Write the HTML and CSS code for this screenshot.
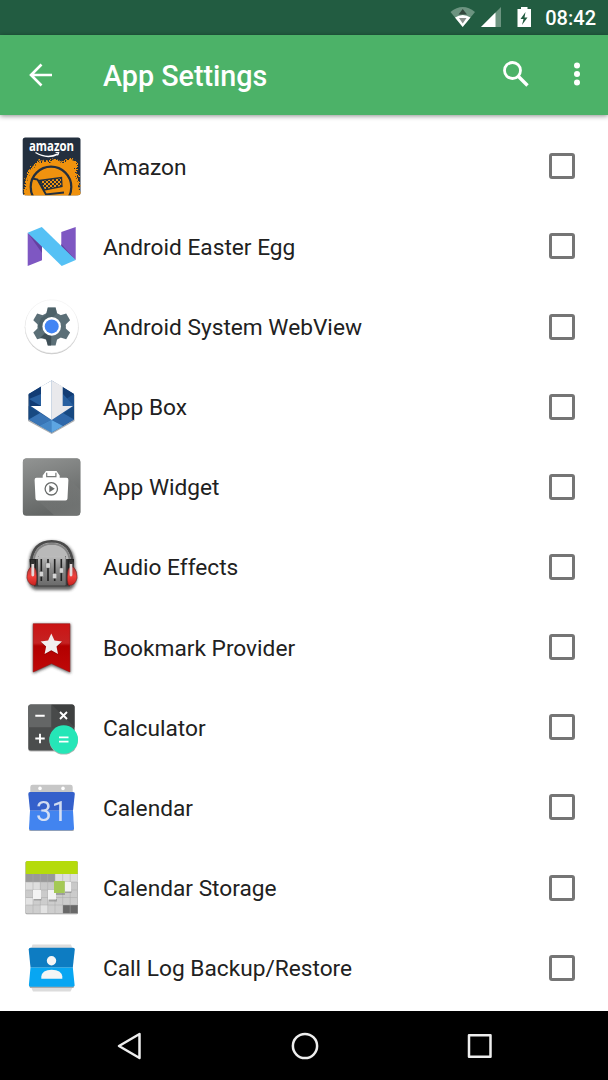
FILE: index.html
```html
<!DOCTYPE html>
<html lang="en">
<head>
    <meta charset="UTF-8">
    <meta name="viewport" content="width=device-width, initial-scale=1.0">
    <title>App Settings</title>
    <link rel="stylesheet" href="styles.css">
</head>
<body>
    <div class="screen">
        <div class="status-bar">
            <svg class="status-icons" width="90" height="34" viewBox="446 0 90 34">
                <path d="M450.5 12Q462.7 2 475 12L462.7 27Z" fill="#6c9480"/>
                <path d="M455 17.500Q462.7 12.500 470.500 17.500L462.700 27Z" fill="#fff"/>
                <path d="M458.500 14.500L462.700 9L467 14.500Z" fill="#34483e"/>
                <path d="M459 18H466.500L462.700 23.500Z" fill="#89908c"/>
                <path d="M481 27L501 7V27Z" fill="#6c9480"/>
                <path d="M481 27L495.500 12.500V27Z" fill="#fff"/>
                <path d="M517.500 9H521V7H527.500V9H531V27H517.500Z" fill="#fff"/>
                <path d="M525.500 12L520.500 19H523.500L522 25L527.500 17.500H524.500Z" fill="#225c41"/>
            </svg>
            <span class="clock">08:42</span>
        </div>

        <header class="toolbar">
            <svg class="back" width="24" height="24" viewBox="0 0 24 24">
                <path d="M23 12H2M12.500 1.500L2 12L12.500 22.500" fill="none" stroke="#fff" stroke-width="2.600"/>
            </svg>
            <h1>App Settings</h1>
            <svg class="search" width="28" height="28" viewBox="0 0 28 28">
                <circle cx="10.500" cy="10.500" r="8" fill="none" stroke="#fff" stroke-width="2.800"/>
                <path d="M16.500 16.500L25.500 25.500" stroke="#fff" stroke-width="3.400"/>
            </svg>
            <svg class="more" width="8" height="26" viewBox="0 0 8 26">
                <g fill="#fff"><circle cx="4" cy="4.500" r="3"/><circle cx="4" cy="13" r="3"/><circle cx="4" cy="21.500" r="3"/></g>
            </svg>
        </header>

        <ul class="app-list">
            <li class="app">
                <svg class="app-icon" viewBox="0 0 63 63">
                    <defs>
                        <clipPath id="amz"><rect x="2.700" y="2.500" width="57.800" height="57.700" rx="2.500"/></clipPath>
                        <pattern id="mesh" width="4" height="4" patternUnits="userSpaceOnUse"><rect width="4" height="4" fill="#232f3e"/><rect width="2" height="2" fill="#f0920f"/><rect x="2" y="2" width="2" height="2" fill="#f0920f"/></pattern>
                        <filter id="rough" x="-10%" y="-10%" width="120%" height="120%"><feTurbulence type="fractalNoise" baseFrequency=".7" numOctaves="2" seed="4"/><feDisplacementMap in="SourceGraphic" scale="9" xChannelSelector="R" yChannelSelector="G"/></filter>
                    </defs>
                    <g clip-path="url(#amz)">
                        <rect width="63" height="63" fill="#232f3e"/>
                        <path d="M3 63L5 50L7 39L12 32L19 25L25 27L34 24L43 27L51 23L57 27L57 38L59 48L61 63Z" fill="#f0920f" filter="url(#rough)"/>
                        <path d="M7 63L9 48L16 35L30 28L45 32L54 42L57 63Z" fill="#f0920f"/>
                        <circle cx="31" cy="52" r="20.300" fill="none" stroke="#232f3e" stroke-width="2.200"/>
                        <path d="M12.500 43.500L17.500 44.500L26 59.500L44 57.500" fill="none" stroke="#232f3e" stroke-width="1.900"/>
                        <path d="M19.500 45.500L41.500 42.500L42 51.500L24.500 55Z" fill="url(#mesh)" stroke="#232f3e" stroke-width="1.300"/>
                    </g>
                    <text class="amazon-logo" x="31.500" y="16.200" textLength="45" lengthAdjust="spacingAndGlyphs">amazon</text>
                    <path d="M15.500 17.500Q27 24.500 38 19" fill="none" stroke="#fff" stroke-width="1.400"/>
                    <path d="M35.500 17.600L39 17.400L37.700 20.500" fill="none" stroke="#fff"/>
                </svg>
                <span class="app-name">Amazon</span>
                <span class="checkbox"></span>
            </li>
            <li class="app">
                <svg class="app-icon" viewBox="0 0 63 63">
                    <path d="M7.700 17.700L22 31V45.300L7.700 51ZM41.300 17L55.700 12V45L41.300 32Z" fill="#7e57c2"/>
                    <path d="M7.700 17.700L22 38V31ZM41.300 29L55.700 45L41.300 34Z" fill="#6540a0"/>
                    <path d="M7.700 17.700L21.800 12L55.700 45L41.700 51Z" fill="#55c1f5"/>
                </svg>
                <span class="app-name">Android Easter Egg</span>
                <span class="checkbox"></span>
            </li>
            <li class="app">
                <svg class="app-icon" viewBox="0 0 63 63">
                    <circle cx="31.700" cy="32.300" r="26.900" fill="#cacaca"/>
                    <circle cx="31.700" cy="31.400" r="26.600" fill="#fff" stroke="#ececec" stroke-width=".5"/>
                    <g fill="#5b6f77">
                        <circle cx="31.700" cy="31.400" r="14.200"/>
                        <path id="tooth" d="M26 20L27.800 12.400H35.600L37.400 20V43L35.600 50.400H27.800L26 43Z"/>
                        <use href="#tooth" transform="rotate(60 31.700 31.400)"/>
                        <use href="#tooth" transform="rotate(120 31.700 31.400)"/>
                    </g>
                    <path d="M31.700 31.400L20 43L26 44.500L27.800 50.400H31Z" fill="#37474f" opacity=".8"/>
                    <path d="M26 20L27.800 12.400H35.600L37 18L20 36L18 31L21 23Z" fill="#455a60" opacity=".6"/>
                    <circle cx="31.700" cy="31.400" r="9.300" fill="#fff"/>
                    <circle cx="31.700" cy="31.400" r="7" fill="#4285f4"/>
                </svg>
                <span class="app-name">Android System WebView</span>
                <span class="checkbox"></span>
            </li>
            <li class="app">
                <svg class="app-icon" viewBox="0 0 63 63">
                    <path d="M31.700 6.500L54.500 20V46L31.700 59L8 46V20Z" fill="#a9adb2"/>
                    <path d="M31.700 5.500L54 19V44.500L31.700 57.500L8.700 44.500V19Z" fill="#1c4f8d"/>
                    <path d="M8.700 19L21 11.500V31H10ZM42.700 12L54 19L43 26Z" fill="#123c74"/>
                    <path d="M21 19V31L9 24ZM43 19L54 31H43Z" fill="#285f9f"/>
                    <path d="M8.700 31L20 39L8.700 44.500ZM54 31V44L43 39Z" fill="#174981"/>
                    <path d="M20 38L31.700 45L20 51L8.700 44.500Z" fill="#3975b6"/>
                    <path d="M31.700 45L43 38L54 44.500L43 51Z" fill="#2f68aa"/>
                    <path d="M31.700 45L43 51L31.700 57.500L20 51Z" fill="#5da5e2"/>
                    <path d="M31.700 45V57.500L20 51Z" fill="#4587c7"/>
                    <path d="M31.700 5.500L42.700 11.500V31H53L31.700 45Z" fill="#e9e9ec"/>
                    <path d="M31.700 5.500L21 11.500V31H10.700L31.700 45Z" fill="#fff"/>
                </svg>
                <span class="app-name">App Box</span>
                <span class="checkbox"></span>
            </li>
            <li class="app">
                <svg class="app-icon" viewBox="0 0 63 63">
                    <defs><linearGradient id="grey" x1="0" y1="0" x2="0.300" y2="1"><stop stop-color="#929493"/><stop offset="1" stop-color="#636665"/></linearGradient><linearGradient id="shade" x1="0" y1="0" x2="1" y2="1"><stop stop-color="#666968"/><stop offset="1" stop-color="#858786"/></linearGradient></defs>
                    <rect x="2.900" y="3.400" width="57.400" height="57.400" rx="3.500" fill="#5d605f"/>
                    <rect x="2.900" y="3.400" width="57.400" height="56.700" rx="3.500" fill="url(#grey)"/>
                    <path d="M15 43L34 60H57Q60.300 60 60.300 56.500V35L48 22Z" fill="url(#shade)" opacity=".45"/>
                    <path d="M22.700 22.800V20.500L26 16.100H36.500L39.700 20.500V22.800H46.500Q48.500 22.800 48.400 25L47.500 43.500Q47.400 45.500 45.500 45.500H17.500Q15.600 45.500 15.500 43.500L14.600 25Q14.500 22.800 16.500 22.800Z" fill="#fff"/>
                    <path d="M26.700 17.700V21.600H35.900V17.700" fill="none" stroke="#777a79" stroke-width="1.200"/>
                    <circle cx="31.300" cy="33.800" r="6.200" fill="none" stroke="#686b6a" stroke-width="1.300"/>
                    <path d="M29.300 30.300L34.800 33.800L29.300 37.300Z" fill="#686b6a"/>
                </svg>
                <span class="app-name">App Widget</span>
                <span class="checkbox"></span>
            </li>
            <li class="app">
                <svg class="app-icon" viewBox="0 0 63 63">
                    <defs>
                        <filter id="soft" x="-20%" y="-20%" width="140%" height="140%"><feGaussianBlur stdDeviation="1.500"/></filter>
                        <linearGradient id="panel" x1="0" y1="0" x2="0" y2="1"><stop stop-color="#bdbdbd"/><stop offset=".5" stop-color="#858585"/><stop offset="1" stop-color="#6b6b6b"/></linearGradient>
                        <linearGradient id="ear" x1="0" y1="0" x2="0" y2="1"><stop stop-color="#a93a38"/><stop offset=".5" stop-color="#f0413c"/><stop offset="1" stop-color="#c92320"/></linearGradient>
                    </defs>
                    <path d="M9 32Q8 7 32 6Q56 7 55 32Q60 50 50 55H15Q4 50 9 32Z" fill="#333" opacity=".75" filter="url(#soft)"/>
                    <path d="M12 28Q14 8 32 7Q50 8 52 28L50 51H14Z" fill="#b9b9b9"/>
                    <path d="M11 27Q13 6.500 31.700 6.200Q50.500 6.500 52.500 27" fill="none" stroke="#4b4b4b" stroke-width="2.600"/>
                    <path d="M13.500 27Q15 9.300 31.700 8.800Q48.500 9.300 50 27" fill="none" stroke="#858585" stroke-width="2"/>
                    <path d="M14 24H18V21H46V24H50V51.500H14Z" fill="#3d3d3d"/>
                    <rect x="18" y="21" width="27.700" height="29.500" rx="1" fill="url(#panel)"/>
                    <path d="M21.300 24V46M28 24V46M34.700 24V46M41.300 24V46" stroke="#222" stroke-width="1.600"/>
                    <g fill="#d4d4d4" stroke="#666" stroke-width=".4"><rect x="19.200" y="36.500" width="4.300" height="5"/><rect x="25.900" y="28" width="4.300" height="5"/><rect x="32.500" y="38.500" width="4.300" height="5"/><rect x="39.200" y="33" width="4.300" height="5"/></g>
                    <path d="M9.500 24H16V50H14L10 32ZM47.500 24H54L53.500 32L49 50H47.500Z" fill="#222"/>
                    <path d="M10 32.500Q16 30 16.500 38Q17.500 46 15.500 50.500Q8.500 50.500 6.900 43Q6.500 36.500 10 32.500ZM54 32.500Q48 30 47.500 38Q46.500 46 48.500 50.500Q55.500 50.500 57.100 43Q57.500 36.500 54 32.500Z" fill="url(#ear)" stroke="#5d1d1c" stroke-width=".5"/>
                    <path d="M12.800 28V40M51 28V40" stroke="#e5dada" stroke-width="2.800" stroke-linecap="round"/>
                    <path d="M12.800 25V29M51 25V29" stroke="#333" stroke-width="3.500"/>
                </svg>
                <span class="app-name">Audio Effects</span>
                <span class="checkbox"></span>
            </li>
            <li class="app">
                <svg class="app-icon" viewBox="0 0 63 63">
                    <defs><linearGradient id="red" x1="0" y1="0" x2="0" y2="1"><stop stop-color="#ca1414"/><stop offset=".4" stop-color="#c52222"/><stop offset=".46" stop-color="#b20000"/><stop offset="1" stop-color="#bf0808"/></linearGradient></defs>
                    <path d="M13 8H50.500V57.500L31.500 49.500L13 57.500Z" fill="#333" opacity=".8" filter="url(#soft)"/>
                    <path d="M13.200 7.700H49.900V56L31.500 47.600L13.200 56Z" fill="url(#red)" stroke="#9d0808" stroke-width=".5"/>
                    <path d="M31.300 18.500L34.500 25.500L42 26.300L36.500 31.500L38 38.800L31.300 35.200L24.600 38.800L26.100 31.500L20.600 26.300L28.100 25.500Z" fill="#650000" opacity=".5"/>
                    <path d="M31.300 17.600L34.500 24.600L42 25.400L36.500 30.600L38 37.900L31.300 34.300L24.600 37.900L26.100 30.600L20.600 25.400L28.100 24.600Z" fill="#f2eeee"/>
                </svg>
                <span class="app-name">Bookmark Provider</span>
                <span class="checkbox"></span>
            </li>
            <li class="app">
                <svg class="app-icon" viewBox="0 0 63 63">
                    <rect x="8.300" y="9.500" width="46.200" height="46" rx="2.500" fill="#b5b5b5"/>
                    <rect x="8.300" y="8.500" width="46.200" height="46" rx="2.500" fill="#4b4d4d"/>
                    <path d="M8.300 31.200V11Q8.300 8.500 10.800 8.500H31.700V31.200Z" fill="#646666"/>
                    <path d="M31.700 8.500H52Q54.500 8.500 54.500 11V31.200H31.700Z" fill="#3e4040"/>
                    <path d="M31.700 8.500L54.500 31.200H31.700Z" fill="#484a4a"/>
                    <path d="M15.300 19.800H24.700M15.300 42.500H24.700M20 37.800V47.200M40 16L47 23M47 16L40 23" stroke="#fff" stroke-width="1.900"/>
                    <circle cx="43.700" cy="44.300" r="14.300" fill="#aab5b1"/>
                    <circle cx="43.700" cy="43.500" r="14.300" fill="#25e6b7"/>
                    <path d="M39 41.300H48.500M39 45.700H48.500" stroke="#fff" stroke-width="1.700"/>
                </svg>
                <span class="app-name">Calculator</span>
                <span class="checkbox"></span>
            </li>
            <li class="app">
                <svg class="app-icon" viewBox="0 0 63 63">
                    <path d="M10.300 17V11Q10.300 8.700 12.500 8.700H50.500Q52.700 8.700 52.700 11V17Z" fill="#c7c7c7"/>
                    <circle cx="20" cy="12.400" r="1.800" fill="#fff"/><circle cx="43" cy="12.400" r="1.800" fill="#fff"/>
                    <path d="M9 52L9.500 55H53.500L54 52Z" fill="#aaa"/>
                    <path d="M8.300 18Q8.300 16 10 16H53Q55 16 54.800 18L53 34.700H10Z" fill="#3460cb"/>
                    <path d="M10 34.700H53L54 52.500Q54 54.300 52 54.300H11Q9 54.300 9 52.500Z" fill="#4284f0"/>
                    <text class="calendar-day" x="31.700" y="45.300">31</text>
                </svg>
                <span class="app-name">Calendar</span>
                <span class="checkbox"></span>
            </li>
            <li class="app">
                <svg class="app-icon" viewBox="0 0 63 63">
                    <defs><linearGradient id="tiles" x1="0" y1="0" x2="0" y2="1"><stop stop-color="#c4c4c4"/><stop offset="1" stop-color="#cfcfcf"/></linearGradient></defs>
                    <rect x="5.400" y="5.200" width="52.600" height="53" rx="1.500" fill="#999"/>
                    <rect x="5.700" y="4.900" width="52" height="52.500" rx="1.500" fill="url(#tiles)"/>
                    <path d="M5.700 17.900V6.400Q5.700 4.900 7.200 4.900H56.200Q57.700 4.900 57.700 6.400V17.900Z" fill="#b5db0b"/>
                    <path d="M5.700 18H35V26H5.700Z" fill="#999"/>
                    <path d="M35 18H57.700V26H35ZM5.700 26H20V34H5.700Z" fill="#dedede"/>
                    <path d="M43 49H57.700V57.200H43Z" fill="#686868"/>
                    <path d="M20 49H28V57H20ZM5.700 42H13V49H5.700Z" fill="#e3e3e3"/>
                    <path d="M13 18V57M20.300 18V57M27.700 18V57M35 18V57M42.700 18V57M50.200 18V57M6 26H57M6 34H57M6 41.500H57M6 49H57" stroke="#aaa" stroke-width=".5"/>
                    <path d="M14 42H21.500V44.500H14ZM29 43H37V45.500H29ZM36 37H45V39H36ZM45 35H51.500V37H45Z" fill="#777" opacity=".5"/>
                    <path d="M13 34H21V43H13ZM28 34H36V43.500H28ZM45 26H51V35.500H45Z" fill="#f3f3f3"/>
                    <rect x="34" y="25" width="10.700" height="12" fill="#a4c955"/>
                </svg>
                <span class="app-name">Calendar Storage</span>
                <span class="checkbox"></span>
            </li>
            <li class="app">
                <svg class="app-icon" viewBox="0 0 63 63">
                    <path d="M11 13L12.500 8.400H51L52.700 13V51L50.500 55.500H13L11 51Z" fill="#dcdcdc"/>
                    <path d="M9 49L10 52H53.500L54.500 49Z" fill="#aaa"/>
                    <path d="M8.700 13.500Q8.700 11.700 10.500 11.700H53Q55 11.700 54.800 13.500L52.800 31.400H10.500Z" fill="#0d7cc2"/>
                    <path d="M10.500 31.400H52.800L54.600 49Q54.600 50.700 53 50.700H10.500Q8.700 50.700 8.900 49Z" fill="#08a6f2"/>
                    <circle cx="31.500" cy="24.700" r="4.700" fill="#f5f5f5"/>
                    <path d="M21.300 42.700V40.500Q22 34 31.700 33.700Q41.500 34 42.300 40.500V42.700Z" fill="#f5f5f5"/>
                </svg>
                <span class="app-name">Call Log Backup/Restore</span>
                <span class="checkbox"></span>
            </li>
        </ul>

        <nav class="nav-bar">
            <svg width="28" height="30" viewBox="0 0 28 30"><path d="M3 15L23.500 3V27Z"/></svg>
            <svg width="28" height="30" viewBox="0 0 28 30"><circle cx="14" cy="15" r="12.100"/></svg>
            <svg width="28" height="30" viewBox="0 0 28 30"><rect x="3" y="4.300" width="21.500" height="21.500"/></svg>
        </nav>
    </div>
</body>
</html>
```

FILE: styles.css
```css
* {
    box-sizing: border-box;
}

body {
    margin: 0;
    background: #fff;
    font-family: Roboto, sans-serif;
    color: #212121;
}

.screen {
    display: flex;
    flex-direction: column;
    width: 608px;
    height: 1080px;
    overflow: hidden;
}

.status-bar {
    display: flex;
    align-items: center;
    justify-content: flex-end;
    gap: 9px;
    height: 34.5px;
    padding-right: 12px;
    background: #225c41;
    color: #fff;
}

.clock {
    padding-top: 2px;
    font-size: 20px;
    font-weight: 500;
    line-height: 32px;
}

.toolbar {
    display: flex;
    align-items: center;
    height: 80.2px;
    padding: 0 27.5px 0 28.5px;
    background: #4cb268;
    box-shadow: 0 1px 5px rgba(0, 0, 0, 0.45);
    color: #fff;
}

.toolbar h1 {
    flex: 1;
    margin: 3px 0 0 50.5px;
    font-size: 28.7px;
    font-weight: 500;
}

.search {
    margin: 0 42.5px 2px 0;
}

.more {
    margin-bottom: 1px;
}

.app-list {
    flex: 1;
    margin: 0;
    padding: 11.5px 0 0;
    list-style: none;
}

.app {
    display: flex;
    align-items: center;
    height: 80.15px;
    padding: 0 33px 0 20px;
}

.app-icon {
    width: 63px;
    height: 63px;
    margin-right: 20px;
}

.app-name {
    flex: 1;
    padding-top: 2px;
    font-size: 22.7px;
}

.checkbox {
    width: 26px;
    height: 26px;
    border: 3px solid #757575;
    border-radius: 3px;
}

.amazon-logo {
    fill: #fff;
    font: 700 14px "Open Sans", sans-serif;
    text-anchor: middle;
}

.calendar-day {
    fill: #e3e9f5;
    font: 400 28px Roboto, sans-serif;
    text-anchor: middle;
    opacity: 0.9;
}

.nav-bar {
    display: flex;
    align-items: center;
    justify-content: space-between;
    height: 69px;
    padding: 0 114.5px 0 115.5px;
    background: #000;
}

.nav-bar svg {
    fill: none;
    stroke: #eee;
    stroke-width: 2.5;
    stroke-linejoin: round;
}
```
